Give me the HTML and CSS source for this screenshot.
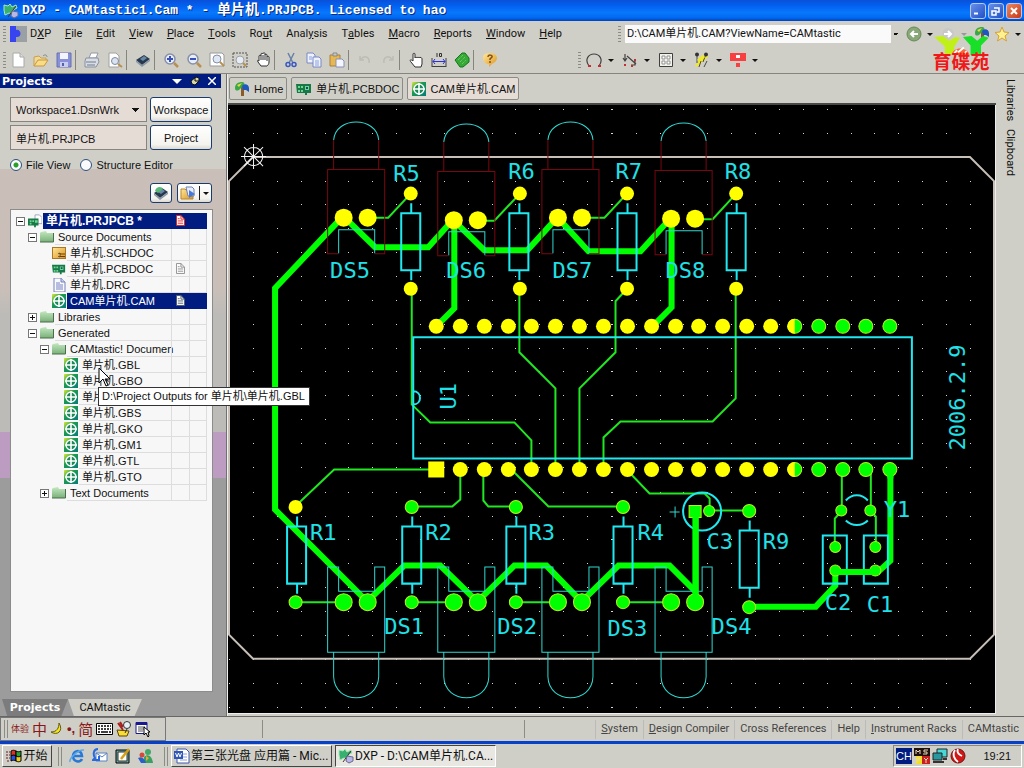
FILE: index.html
```html
<!DOCTYPE html>
<html lang="zh-CN">
<head>
<meta charset="utf-8">
<title>DXP - CAMtastic1.Cam</title>
<link rel="stylesheet" href="styles.css">
</head>
<body>
<svg class="defs" aria-hidden="true">
  <defs>
    <linearGradient id="g-cam" x1="0" y1="0" x2="1" y2="1"><stop offset="0" stop-color="#d8e83c"/><stop offset=".4" stop-color="#1c9a50"/><stop offset="1" stop-color="#087c78"/></linearGradient>
    <linearGradient id="g-folder" x1="0" y1="0" x2="0" y2="1"><stop offset="0" stop-color="#c4e8c0"/><stop offset="1" stop-color="#78b078"/></linearGradient>
    <linearGradient id="g-gold" x1="0" y1="0" x2="1" y2="1"><stop offset="0" stop-color="#ffe89a"/><stop offset="1" stop-color="#dd9420"/></linearGradient>
    <symbol id="i-cam" viewBox="0 0 14 14"><rect width="14" height="14" fill="url(#g-cam)"/><circle cx="7" cy="7" r="5" fill="#188c58" stroke="#fff" stroke-width="1.4"/><path d="M7 1v12M1 7h12" stroke="#fff" stroke-width="1.6"/></symbol>
    <symbol id="i-folder" viewBox="0 0 14 14"><path d="M1 2l5-1 1 2h6v9H0V3z" fill="url(#g-folder)"/><path d="M0 12h13.500V3" fill="none" stroke="#4c6c4c"/></symbol>
    <symbol id="i-pcb" viewBox="0 0 16 14"><path d="M0 2h15v9h-4v2H9v-2H1z" fill="#187848"/><path d="M2 4h2v2H2zM5 4h2v2H5zM2 8h2v2H2zM5 8h2v2H5zM9 4h4v4H9z" fill="#70d890"/><path d="M10 5h2v2h-2z" fill="#184878"/></symbol>
    <symbol id="i-prj" viewBox="0 0 16 14"><path d="M8 0h5l3 3v7H8z" fill="#fff" stroke="#98a0b8"/><path d="M0 4h12v8H9v2H7v-2H0z" fill="#187848"/><path d="M2 6h2v2H2zM5 6h2v2H5zM2 9h2v2H2zM8 6h3v3H8z" fill="#70d890"/></symbol>
    <symbol id="i-page" viewBox="0 0 14 14"><path d="M2 0h7l4 4v10H2z" fill="#f8faff" stroke="#7880b8"/><path d="M9 0v4h4" fill="#c8d0f0" stroke="#7880b8"/><path d="M4 5h4M4 7h7M4 9h7M4 11h7" stroke="#7880c0"/></symbol>
    <symbol id="i-sch" viewBox="0 0 14 14"><rect x=".5" y="1.500" width="13" height="11" fill="url(#g-gold)" stroke="#a87828"/><path d="M8 8h5M8 10.500h5M6 8l2-1v4l-2-1" fill="#f8dc90" stroke="#684010"/></symbol>
    <symbol id="i-status" viewBox="0 0 10 12"><path d="M.5.5h5l4 4v7h-9z" fill="#fff" stroke="currentColor"/><path d="M5.500.5v4h4M2 4h2M2 6.500h6M2 9h6" fill="none" stroke="currentColor"/></symbol>
    <symbol id="i-dxp" viewBox="0 0 16 16"><path d="M1 2l4 1 2-2 2 3 4-2 1 3-4 2 1 4-5-1-4 2-1-5z" fill="#38b070" stroke="#a8e8b8"/><path d="M5 14l8-11" stroke="#503030"/><path d="M9 8l6 1v4l-4 2-3-2z" fill="#b8b8e8" stroke="#686890"/></symbol>
    <symbol id="i-home" viewBox="0 0 16 16"><path d="M7 5l3 1v9H7z" fill="#8a5a28"/><path d="M1 7c0-4 3-6 7-6 2 0 3 1 2 3L5 9C3 10 1 10 1 7z" fill="#38a848"/><path d="M8 5c2-3 7-2 7 2v4l-3-2H9z" fill="#1c58c0"/><path d="M3 4l5-2-3 4z" fill="#f0d840"/></symbol>
    <symbol id="i-chip" viewBox="0 0 16 16"><path d="M1 8l8-5 6 4-8 6z" fill="#28384c"/><path d="M1 8v2l6 5v-2zM7 15l8-6V7l-8 6z" fill="#8898a8"/><path d="M5 7l4-3 3 2-4 3z" fill="#6888a8"/></symbol>
    <symbol id="i-glass" viewBox="0 0 16 16"><circle cx="7" cy="7" r="5" fill="#e8eef8" stroke="#8890a8" stroke-width="1.500"/><path d="M11 11l4 4" stroke="#b89050" stroke-width="2.500"/></symbol>
  </defs>
</svg>

<header class="titlebar">
  <svg class="ic16"><use href="#i-dxp"/></svg>
  <h1 class="title">DXP - CAMtastic1.Cam * - <span class="cjk">单片机</span>.PRJPCB. Licensed to hao</h1>
  <button class="win" aria-label="Minimize"><svg viewBox="0 0 14 14"><path d="M3 9.500h4" stroke="#fff" stroke-width="2"/></svg></button>
  <button class="win" aria-label="Restore"><svg viewBox="0 0 14 14"><path d="M5 4h5v4H8M3 7h4v4H3z" fill="none" stroke="#fff" stroke-width="1.500"/></svg></button>
  <button class="win close" aria-label="Close"><svg viewBox="0 0 14 14"><path d="M4 4l6 6M10 4l-6 6" stroke="#fff" stroke-width="2"/></svg></button>
</header>

<nav class="menubar" aria-label="Main menu">
  <span class="grip"></span>
  <svg class="menu-logo" viewBox="0 0 17 16"><path d="M0 0h17v16H0z" fill="#9ba0a4"/><path d="M0 0h6v4c5-2 7 8 0 7v5H0z" fill="#3844f0"/></svg>
  <div class="menus">
    <button>D<u>X</u>P</button><button><u>F</u>ile</button><button><u>E</u>dit</button><button><u>V</u>iew</button><button><u>P</u>lace</button><button><u>T</u>ools</button><button>Ro<u>u</u>t</button><button>Anal<u>y</u>sis</button><button>T<u>a</u>bles</button><button><u>M</u>acro</button><button><u>R</u>eports</button><button><u>W</u>indow</button><button><u>H</u>elp</button>
  </div>
  <div class="address">
    <span class="grip"></span>
    <select aria-label="Address"><option>D:\CAM单片机.CAM?ViewName=CAMtastic</option></select>
    <button aria-label="Back"><svg class="ic16" viewBox="0 0 16 16"><circle cx="8" cy="8" r="7" fill="#88a878" stroke="#688858"/><path d="M12 8H5M8 5L5 8l3 3" fill="none" stroke="#fff" stroke-width="2"/></svg><i class="caret"></i></button>
    <button aria-label="Forward"><svg class="ic16" viewBox="0 0 16 16"><circle cx="8" cy="8" r="6" fill="#c8c8c8"/><path d="M4 8h7M8 5l3 3-3 3" fill="none" stroke="#fff" stroke-width="2"/></svg><i class="caret dim"></i></button>
    <button aria-label="Home page"><svg class="ic16"><use href="#i-home"/></svg></button>
    <button aria-label="Favorites"><svg class="ic16" viewBox="0 0 16 16"><path d="M8 1l2 5 5 .5-4 3.500 1.500 5L8 12l-4.500 3L5 10 1 6.500 6 6z" fill="#fff090" stroke="#d8a030"/></svg><i class="caret"></i></button>
  </div>
  <div class="watermark">
    <svg viewBox="0 0 60 22"><path d="M2 2l9-1 7 5 6-4 5 1-6 9v9H13v-9z" fill="#c0f018"/><path d="M32 2l9-1 6 5 6-5 6 2-8 8v10H40V11z" fill="#18e028"/><path d="M20 21c2-9 16-9 19 0z" fill="#f86838"/><path d="M27 18l6-5M23 19l3-3M34 19l2-2" stroke="#fff" stroke-width="2"/></svg>
    <strong>育碟苑</strong>
  </div>
</nav>

<div class="toolbar" role="toolbar" aria-label="Standard">
  <span class="grip"></span>
  <button aria-label="New"><svg viewBox="0 0 16 16"><path d="M3 1h7l4 4v10H3z" fill="#fff" stroke="#a8a8a8"/><path d="M10 1v4h4" fill="#ddd" stroke="#a8a8a8"/></svg></button>
  <button aria-label="Open"><svg viewBox="0 0 16 16"><path d="M1 14V5l5-1 2 2h5v3" fill="#f0d898" stroke="#c8a050"/><path d="M1 14l4-6h10l-4 6z" fill="#f8dc88" stroke="#c89838"/><path d="M10 4c2-2 4-1 4 1" fill="none" stroke="#788"/></svg></button>
  <button aria-label="Save"><svg viewBox="0 0 16 16"><path d="M1 1h14v14H1z" fill="#8890d8" stroke="#6870b0"/><path d="M4 1h8v6H4z" fill="#f4f4ff"/><path d="M4 10h8v5H4z" fill="#c8ccf0"/><path d="M6 11h2v3H6z" fill="#5860a8"/></svg></button>
  <i class="sep"></i>
  <button aria-label="Print"><svg viewBox="0 0 16 16"><path d="M5 6l2-5h7l-2 5z" fill="#fff" stroke="#9098a8"/><path d="M2 6h12l1 4-3 5H1V9z" fill="#d8dce4" stroke="#8890a0"/><path d="M2 10h10M3 13h8" stroke="#707c90"/></svg></button>
  <button aria-label="Print preview"><svg viewBox="0 0 16 16"><path d="M2 1h7l3 3v11H2z" fill="#fff" stroke="#a0a0a0"/><circle cx="8" cy="9" r="3.500" fill="#d8e4f0" stroke="#8088a0"/><path d="M11 12l4 3" stroke="#b89050" stroke-width="2"/></svg></button>
  <i class="sep"></i>
  <button aria-label="Devices"><svg><use href="#i-chip"/></svg></button>
  <i class="sep"></i>
  <button aria-label="Zoom in"><svg viewBox="0 0 16 16"><use href="#i-glass"/><path d="M4 7h6M7 4v6" stroke="#3850b8" stroke-width="2"/></svg></button>
  <button aria-label="Zoom out"><svg viewBox="0 0 16 16"><use href="#i-glass"/><path d="M4 7h6" stroke="#3850b8" stroke-width="2"/></svg></button>
  <button aria-label="Fit document"><svg viewBox="0 0 16 16"><path d="M1 1h12l2 2v11H1z" fill="#fff" stroke="#989898"/><circle cx="8" cy="7" r="4" fill="#dde8f4" stroke="#8890a8"/><path d="M11 10l4 4" stroke="#b89050" stroke-width="2"/></svg></button>
  <button aria-label="Zoom area"><svg viewBox="0 0 16 16"><path d="M1 1h14v14H1z" fill="none" stroke="#505050" stroke-dasharray="2 1"/><circle cx="8" cy="8" r="4" fill="#e4ecf4" stroke="#a0a0a8"/><path d="M11 11l3 3" stroke="#b89050" stroke-width="2"/></svg></button>
  <button aria-label="Pan"><svg viewBox="0 0 16 16"><path d="M4 9V4c0-1 2-1 2 0V2c0-1 2-1 2 0V1.500c0-1 2-1 2 0V3c0-1 2-1 2 0v2c0-1 2-1 2 0v5c0 2-1 3-2 4H6L3 10C2 8 3 8 4 9z" fill="#fff" stroke="#303030"/><path d="M6 4v4M8 3v5M10 3v5M12 5v4" stroke="#303030"/></svg></button>
  <i class="sep"></i>
  <button aria-label="Cut"><svg viewBox="0 0 16 16"><path d="M5 1l5 10M11 1L6 11" stroke="#6880a8" stroke-width="1.500"/><circle cx="5" cy="12.500" r="2" fill="none" stroke="#3858c0" stroke-width="1.500"/><circle cx="11" cy="12.500" r="2" fill="none" stroke="#3858c0" stroke-width="1.500"/></svg></button>
  <button aria-label="Copy"><svg viewBox="0 0 16 16"><path d="M1 1h6l2 2v8H1z" fill="#eef2ff" stroke="#7888c0"/><path d="M7 5h6l2 2v8H7z" fill="#eef2ff" stroke="#7888c0"/><path d="M3 5h3M3 7h3M9 9h4M9 11h4M9 13h4" stroke="#88a0e0"/></svg></button>
  <button aria-label="Paste"><svg viewBox="0 0 16 16"><path d="M1 3h10v11H1z" fill="#e8b850" stroke="#a88040"/><path d="M4 1h4v3H4z" fill="#c8c8c8" stroke="#888"/><path d="M7 7h6l2 2v6H7z" fill="#f4f6ff" stroke="#8890b8"/></svg></button>
  <i class="sep"></i>
  <button aria-label="Undo" disabled><svg viewBox="0 0 16 16"><path d="M4 7c4-4 9-2 8 4M3 4v4h4" fill="none" stroke="#bcbcb8" stroke-width="1.500"/></svg></button>
  <button aria-label="Redo" disabled><svg viewBox="0 0 16 16"><path d="M12 7c-4-4-9-2-8 4M13 4v4H9" fill="none" stroke="#bcbcb8" stroke-width="1.500"/></svg></button>
  <i class="sep"></i>
  <button aria-label="Select"><svg viewBox="0 0 16 16"><path d="M5 9V2c0-1 2-1 2 0v4c0-1 2-1 2 0 0-1 2-1 2 0 0-1 3-1 3 1v5l-1 3H7L3 10C1 8 3 7 5 9z" fill="#fff" stroke="#303030"/></svg></button>
  <button aria-label="Measure"><svg viewBox="0 0 16 16"><path d="M1 6v9M15 6v9M1 14.500h14" fill="none" stroke="#404040"/><path d="M2 9.500h12M4 7L2 9.500 4 12M12 7l2 2.500-2 2.500" fill="none" stroke="#2830e0"/><path d="M6 1v4M8.500 1.500h2v3h-2z" fill="none" stroke="#303030"/></svg></button>
  <button aria-label="Board"><svg viewBox="0 0 16 16"><path d="M1 8l7-7h3l4 5v4l-6 5H6z" fill="#38a838" stroke="#107818"/><path d="M4 8l5-5M6 10l5-5M8 12l4-4" stroke="#80dc70" stroke-dasharray="1 1"/></svg></button>
  <i class="sep"></i>
  <button aria-label="Help"><svg viewBox="0 0 16 16"><path d="M8 1c4 0 7 2 7 5s-3 5-5 6l-3 3v-3c-3 0-6-2-6-6s3-5 7-5z" fill="url(#g-gold)"/><path d="M6 5c0-3 5-2 4 0L8 7v1M8 9v2" fill="none" stroke="#805018" stroke-width="1.500"/></svg></button>
  <div class="tools-right">
    <span class="grip"></span>
    <button aria-label="Arc"><svg viewBox="0 0 16 16"><path d="M3 14C-2 7 3 2 8 2s10 5 5 12" fill="none" stroke="#404040" stroke-width="1.200"/><path d="M2 14h3M12 14h3" stroke="#c03030" stroke-width="2"/></svg><i class="caret"></i></button>
    <button aria-label="Line"><svg viewBox="0 0 16 16"><path d="M3 2v7M1 6l2 3 2-3M5 4l9 8M13 9v4H9" fill="none" stroke="#404040" stroke-width="1.200"/><path d="M2 13h2M9 14h2M12 8h2" stroke="#c03030" stroke-width="2"/></svg><i class="caret"></i></button>
    <button aria-label="Grid"><svg viewBox="0 0 16 16"><path d="M1.500 1.500h13v13h-13z" fill="#f2f2ec" stroke="#404040"/><path d="M4 4h3v3H4zM9 4h3v3H9zM4 9h3v3H4zM9 9h3v3H9z" fill="#fff" stroke="#909090"/></svg><i class="caret"></i></button>
    <button aria-label="Inspect"><svg viewBox="0 0 16 16"><path d="M13 3l1 2-9 8-3 2-1-2z" fill="#f0e828"/><path d="M3 2v9M12 2l-3 8M7 9l-2 6M13 9l-3 6" stroke="#484848"/><path d="M4 9l6-5" stroke="#f0e828" stroke-width="3"/><circle cx="3" cy="2.500" r="2" fill="#333"/><circle cx="12" cy="2.500" r="2" fill="#333"/></svg><i class="caret"></i></button>
    <button aria-label="Pads"><svg viewBox="0 0 16 16"><path d="M0 1h16v8H0z" fill="#f84040"/><path d="M6 3h4v3H6z" fill="#fff"/><path d="M6 11h4v4H6z" fill="#f84040"/></svg><i class="caret"></i></button>
  </div>
</div>

<main class="workspace">
  <aside class="panel">
    <div class="panel-head"><h2>Projects</h2><i class="caret white"></i><svg class="pin" viewBox="0 0 10 10"><path d="M1 5l5-4 3 1v3L5 9 2 8z" fill="#d8d8a8" stroke="#111"/><path d="M5 1v4h4" fill="none" stroke="#111"/></svg><button class="x" aria-label="Close panel"><svg viewBox="0 0 8 8"><path d="M0 0l8 8M8 0L0 8" stroke="#fff" stroke-width="1.500"/></svg></button></div>
    <div class="panel-body">
      <div class="form">
        <select class="field" aria-label="Workspace file"><option>Workspace1.DsnWrk</option></select><button class="btn">Workspace</button>
        <input class="field" aria-label="Project file" value="单片机.PRJPCB"><button class="btn">Project</button>
      </div>
      <div class="radios">
        <label><input type="radio" name="view" checked>File View</label>
        <label><input type="radio" name="view">Structure Editor</label>
      </div>
      <div class="icon-btns">
        <button class="btn sm" aria-label="Compile"><svg class="ic16" viewBox="0 0 16 16"><use href="#i-chip"/><path d="M2 6c1-5 7-5 8-2l-5 4z" fill="#58b878"/></svg></button>
        <button class="btn md" aria-label="Open documents"><svg class="ic16" viewBox="0 0 16 16"><path d="M1 14V4h4l2 2h6v8z" fill="url(#g-gold)" stroke="#b88830"/><path d="M6 2h6l2 2v7H8z" fill="#e8eeff" stroke="#7080b0"/><path d="M9 5l6 4-6 4z" fill="#4878d8"/></svg><i class="bar"></i><i class="caret"></i></button>
      </div>
      <div class="tree" role="tree">
        <div class="row l0 sel top"><i class="ex open"></i><svg class="ti"><use href="#i-prj"/></svg><span class="name"><b>单片机.PRJPCB *</b></span><span class="cell red"><svg><use href="#i-status"/></svg></span><span class="cell"></span></div>
        <div class="row l1"><i class="ex open"></i><svg class="ti"><use href="#i-folder"/></svg><span class="name">Source Documents</span><span class="cell"></span><span class="cell"></span></div>
        <div class="row l2"><svg class="ti"><use href="#i-sch"/></svg><span class="name">单片机.SCHDOC</span><span class="cell"></span><span class="cell"></span></div>
        <div class="row l2"><svg class="ti"><use href="#i-pcb"/></svg><span class="name">单片机.PCBDOC</span><span class="cell"><svg><use href="#i-status"/></svg></span><span class="cell"></span></div>
        <div class="row l2"><svg class="ti"><use href="#i-page"/></svg><span class="name">单片机.DRC</span><span class="cell"></span><span class="cell"></span></div>
        <div class="row l2 sel"><svg class="ti"><use href="#i-cam"/></svg><span class="name">CAM单片机.CAM</span><span class="cell"><svg><use href="#i-status"/></svg></span><span class="cell"></span></div>
        <div class="row l1"><i class="ex"></i><svg class="ti"><use href="#i-folder"/></svg><span class="name">Libraries</span><span class="cell"></span><span class="cell"></span></div>
        <div class="row l1"><i class="ex open"></i><svg class="ti"><use href="#i-folder"/></svg><span class="name">Generated</span><span class="cell"></span><span class="cell"></span></div>
        <div class="row l2x"><i class="ex open"></i><svg class="ti"><use href="#i-folder"/></svg><span class="name">CAMtastic! Documen</span><span class="cell"></span><span class="cell"></span></div>
        <div class="row l3"><svg class="ti"><use href="#i-cam"/></svg><span class="name">单片机.GBL</span><span class="cell"></span><span class="cell"></span>
          <svg class="cursor" viewBox="0 0 14 20"><path d="M1 1v15l4-4 3 7 2-1-3-6h5z" fill="#fff" stroke="#000"/></svg>
          <span class="tooltip" role="tooltip">D:\Project Outputs for 单片机\单片机.GBL</span></div>
        <div class="row l3"><svg class="ti"><use href="#i-cam"/></svg><span class="name">单片机.GBO</span><span class="cell"></span><span class="cell"></span></div>
        <div class="row l3"><svg class="ti"><use href="#i-cam"/></svg><span class="name">单片机.GBP</span><span class="cell"></span><span class="cell"></span></div>
        <div class="row l3"><svg class="ti"><use href="#i-cam"/></svg><span class="name">单片机.GBS</span><span class="cell"></span><span class="cell"></span></div>
        <div class="row l3"><svg class="ti"><use href="#i-cam"/></svg><span class="name">单片机.GKO</span><span class="cell"></span><span class="cell"></span></div>
        <div class="row l3"><svg class="ti"><use href="#i-cam"/></svg><span class="name">单片机.GM1</span><span class="cell"></span><span class="cell"></span></div>
        <div class="row l3"><svg class="ti"><use href="#i-cam"/></svg><span class="name">单片机.GTL</span><span class="cell"></span><span class="cell"></span></div>
        <div class="row l3"><svg class="ti"><use href="#i-cam"/></svg><span class="name">单片机.GTO</span><span class="cell"></span><span class="cell"></span></div>
        <div class="row l2x"><i class="ex"></i><svg class="ti"><use href="#i-folder"/></svg><span class="name">Text Documents</span><span class="cell"></span><span class="cell"></span></div>
      </div>
    </div>
    <div class="panel-tabs"><button class="on">Projects</button><button>CAMtastic</button></div>
  </aside>

  <section class="docs">
    <div class="doc-tabs">
      <button><svg class="ic16"><use href="#i-home"/></svg>Home</button>
      <button><svg class="ic16"><use href="#i-pcb"/></svg>单片机.PCBDOC</button>
      <button class="on"><svg class="ic14"><use href="#i-cam"/></svg>CAM单片机.CAM</button>
    </div>
    <div class="canvas">
    <svg class="pcb" viewBox="228 105 766 609" preserveAspectRatio="xMinYMin slice" role="img" aria-label="PCB layout">
      <path id="grid" class="grid"/>
      <path class="outline" d="M253 157H969L993 181V634L969 658H253L229 634V181z"/>
      <defs>
        <g id="led-t"><path class="red" d="M338.500 253.500h-11v-84h57v84h-10M333.500 169v-29M378.500 169v-29"/><path class="cy1" d="M333.500 140c2-24 43-24 45 0M338.500 253v-23.500h36V253"/></g>
        <path id="led-b" class="cy1" d="M327.500 651.500v-85h11v24h36v-24h10v85zM333.500 652v24c1 28 44 28 45 0v-24"/>
        <path id="res" class="cy2" d="M-9 20H10V77H-9zM1 10V20M1 77V87"/>
      </defs>
      <g class="thick">
        <path d="M454 218L428 247H375L343 216L275 288V509L367 601L404 565H440L477 601L514 565H546L581 601L618 565H669L695 591"/>
        <path d="M453 220L484 250H527L557 217L588 251H640L670 218"/>
        <path d="M454 220V308L436 326M671 218V307L652 326M695 510V601M889.500 469V560L877 571.500H834.500V585L815 606H748"/>
      </g>
      <path class="thin" d="M367 217.500H388L410 194M477 220.500H494L519 194M581 217.500H604L626 194M694 219H712L735 194M411.500 288V404L430 422H514L531 440V469M519 288V352L555 388V469M627 288L615 301V352L579 388V469M735 288V398L712 421H620L603 437V469M436 469H334L295 506M460 469V499L452 506H412M483 469V500L488 506H515M511 469L548 506H622M626 469L649 493H704L709 498V510H748M295 601.500H343M411 601.500H453M515 601.500H557M622 601.500H670M841 469V510L834 518V546M870 473V510L875 516V546"/>
      <use href="#led-t"/><use href="#led-t" x="110" y="2"/><use href="#led-t" x="214"/><use href="#led-t" x="327" y="1"/>
      <use href="#led-b"/><use href="#led-b" x="110"/><use href="#led-b" x="214"/><use href="#led-b" x="327"/>
      <use href="#res" x="410" y="193"/><use href="#res" x="518" y="193"/><use href="#res" x="626" y="193"/><use href="#res" x="735" y="193"/>
      <use href="#res" x="296" y="506"/><use href="#res" x="411" y="506"/><use href="#res" x="515" y="506"/><use href="#res" x="622" y="506"/><use href="#res" x="748" y="510"/>
      <path class="cy2" d="M413 337H911V458H413zM413 391c9 0 9 13 0 13M822 535h24v48h-24zM863 535h24v48h-24zM845 500c6-7 16-7 22 0M845 520c6 6 16 6 22 0"/>
      <circle class="cy2" cx="701.500" cy="511" r="19"/>
      <path class="cy1" d="M669 511.500h10M674.500 506v11"/>
      <g class="py">
        <circle cx="343.500" cy="217.500" r="9"/><circle cx="367.500" cy="217.500" r="9"/><circle cx="453.500" cy="220" r="9"/><circle cx="477.500" cy="220" r="9"/><circle cx="557.500" cy="217.500" r="9"/><circle cx="581.500" cy="217.500" r="9"/><circle cx="670.500" cy="218.500" r="9"/><circle cx="694.500" cy="218.500" r="9"/>
        <circle cx="410.500" cy="193.500" r="7"/><circle cx="519.500" cy="193.500" r="7"/><circle cx="626.500" cy="193.500" r="7"/><circle cx="735.500" cy="193.500" r="7"/>
        <circle cx="410.500" cy="288.500" r="7"/><circle cx="519.500" cy="288.500" r="7"/><circle cx="626.500" cy="288.500" r="7"/><circle cx="735.500" cy="288.500" r="7"/><circle cx="295.500" cy="506.500" r="7"/>
        <path d="M428 461h16v16h-16z"/>
      </g>
      <g id="pins"></g>
      <g class="pg">
        <circle cx="343.500" cy="601.500" r="8.500"/><circle cx="367.500" cy="601.500" r="8.500"/><circle cx="453.500" cy="601.500" r="8.500"/><circle cx="477.500" cy="601.500" r="8.500"/><circle cx="557.500" cy="601.500" r="8.500"/><circle cx="581.500" cy="601.500" r="8.500"/><circle cx="670.500" cy="601.500" r="8.500"/><circle cx="694.500" cy="601.500" r="8.500"/>
        <circle cx="295.500" cy="601.500" r="6.500"/><circle cx="411.500" cy="601.500" r="6.500"/><circle cx="515.500" cy="601.500" r="6.500"/><circle cx="622.500" cy="601.500" r="6.500"/>
        <circle cx="411.500" cy="506.500" r="6.500"/><circle cx="515.500" cy="506.500" r="6.500"/><circle cx="622.500" cy="506.500" r="6.500"/><circle cx="748.500" cy="510.500" r="6.500"/><circle cx="748.500" cy="606.500" r="6.500"/>
        <path d="M688.500 505h12v12h-12z"/><circle cx="708.500" cy="510.500" r="5.500"/><circle cx="840.500" cy="510" r="5.500"/><circle cx="869.500" cy="510" r="5.500"/><circle cx="834.500" cy="546.500" r="5.500"/><circle cx="834.500" cy="570" r="5.500"/><circle cx="874.500" cy="546.500" r="5.500"/><circle cx="874.500" cy="570" r="5.500"/>
      </g>
      <path class="thick" d="M695 514V596M889.500 469V478M878 571.500H834.500V574"/>
      <path class="origin" d="M253.500 144v25M241 156.500h25M244 147l19 19M263 147l-19 19M253.500 147.500a9 9 0 1 0 .1 0"/>
      <g class="silk">
        <text x="393" y="181">R5</text><text x="508" y="179">R6</text><text x="615" y="179">R7</text><text x="724" y="179">R8</text>
        <text x="330" y="278">DS5</text><text x="446" y="278">DS6</text><text x="552" y="278">DS7</text><text x="665" y="278">DS8</text>
        <text x="310" y="539">R1</text><text x="425" y="539">R2</text><text x="528" y="539">R3</text><text x="637" y="539">R4</text>
        <text x="384" y="633">DS1</text><text x="497" y="633">DS2</text><text x="607" y="635">DS3</text><text x="711" y="633">DS4</text>
        <text x="706" y="548">C3</text><text x="762" y="548">R9</text><text x="883" y="516">Y1</text><text x="824" y="609">C2</text><text x="866" y="611">C1</text>
        <text transform="translate(456 409) rotate(-90)">U1</text><text transform="translate(964 450) rotate(-90)">2006.2.9</text>
      </g>
    </svg>
    </div>
  </section>
  <aside class="side"><button>Libraries</button><button>Clipboard</button></aside>
</main>

<footer class="statusbar">
  <div class="ime"><i class="lines"></i><span class="seal">体验</span><span>中</span><svg class="ic14" viewBox="0 0 14 14"><path d="M9 1c5 8-2 13-8 9 6 0 8-4 8-9z" fill="#f8e818" stroke="#605810"/></svg><span class="punct">•,</span><span>简</span><svg class="kb" viewBox="0 0 17 12"><path d="M.5.5h16v11H.5z" fill="#fff" stroke="#000"/><path d="M2 3h13M2 6h13" stroke="#000" stroke-width="1.500" stroke-dasharray="2 1"/><path d="M2 9h2M5 9h7M13 9h2" stroke="#000" stroke-width="1.500"/></svg><svg class="ic16" viewBox="0 0 16 16"><path d="M1 9l12 1-2 5H3z" fill="#f8e030" stroke="#604010"/><path d="M2 2l5 7M4 1l3 5" stroke="#a82020" stroke-width="2"/><circle cx="11" cy="4" r="3.500" fill="#e8f0f8" stroke="#333"/><path d="M11 8l-2 4" stroke="#333"/></svg><svg class="ic16" viewBox="0 0 16 16"><path d="M1 1.500h11v11H1z" fill="#fff" stroke="#181890"/><path d="M1 2.500h11" stroke="#181890" stroke-width="3"/><path d="M3 6h7M3 8h7M3 10h5" stroke="#555"/><path d="M9 6v8l2-2 2 4 1-1-1-4h2z" fill="#fff" stroke="#000"/></svg></div>
  <span class="pane"></span>
  <span class="pane"></span>
  <div class="panels-btns"><button><u>S</u>ystem</button><button><u>D</u>esign Compiler</button><button>Cross References</button><button>Help</button><button><u>I</u>nstrument Racks</button><button>CAMtastic</button></div>
</footer>

<div class="taskbar">
  <button class="start"><svg class="ic16" viewBox="0 0 16 16"><path d="M5 3c2-1 3-1 5 0v5c-2-1-3-1-5 0z" fill="#e03020" stroke="#000"/><path d="M10 3c2 1 3 1 5 0v5c-2 1-3 1-5 0z" fill="#28a038" stroke="#000"/><path d="M5 8c2-1 3-1 5 0v5c-2-1-3-1-5 0z" fill="#2850d8" stroke="#000"/><path d="M10 8c2 1 3 1 5 0v5c-2 1-3 1-5 0z" fill="#f0d020" stroke="#000"/><path d="M0 4h4M0 7h4M0 10h4M1 13h3" stroke="#602020" stroke-dasharray="2 1"/></svg>开始</button>
  <i class="tgrip"></i>
  <div class="quick">
    <button aria-label="Internet Explorer"><svg class="ic16" viewBox="0 0 16 16"><path d="M13 11c-2 4-9 3-9-3s8-7 9 0H5" fill="none" stroke="#2878d8" stroke-width="2.500"/><path d="M1 14C0 10 10 1 15 2" fill="none" stroke="#58a8e8" stroke-width="1.500"/></svg></button>
    <button aria-label="Outlook Express"><svg class="ic16" viewBox="0 0 16 16"><path d="M4 5h11v8H4z" fill="#fff" stroke="#5880c0"/><path d="M4 5l6 4 5-4" fill="none" stroke="#5880c0"/><path d="M6 1C1 1 1 7 3 10L1 12h6V8" fill="none" stroke="#2868e0" stroke-width="2"/></svg></button>
    <button aria-label="Show desktop"><svg class="ic16" viewBox="0 0 16 16"><path d="M1 2h13v13H1z" fill="#68a8a0" stroke="#000"/><path d="M3 4h9v9H3z" fill="#fff" stroke="#333"/><path d="M6 11l8-10" stroke="#d8a010" stroke-width="2.500"/></svg></button>
    <button aria-label="Messenger"><svg class="ic16" viewBox="0 0 16 16"><circle cx="10" cy="4" r="3" fill="#40a868"/><path d="M6 9c4-4 8-1 9 6H6z" fill="#38a060"/><circle cx="4" cy="7" r="2.500" fill="#d84838"/><path d="M0 10c4-2 6 0 8 5H3z" fill="#2860c8"/><path d="M8 8l3 2-3 3z" fill="#e8a838"/></svg></button>
  </div>
  <i class="tgrip"></i>
  <button class="task"><svg class="ic16" viewBox="0 0 16 16"><path d="M3 1h9l3 3v11H3z" fill="#fff" stroke="#4058a8"/><path d="M6 6h7M6 9h7M6 12h7" stroke="#88a0d8"/><path d="M0 3h9v8H0z" fill="#3058b8"/><path d="M1.500 5l1.500 4 1.500-4L6 9l1.500-4" fill="none" stroke="#fff"/></svg>第三张光盘 应用篇 - Mic...</button>
  <button class="task active"><svg class="ic16"><use href="#i-dxp"/></svg>DXP - D:\CAM单片机.CA...</button>
  <div class="tray"><span class="lang">CH</span><svg class="ic16" viewBox="0 0 16 16"><path d="M0 0h16v8H0z" fill="#201010"/><path d="M2 8h6v8H2z" fill="#f0e020"/><path d="M8 8h8v8H8z" fill="#c82020"/><path d="M2 6V2l2 2 2-2v4M14 2h-4v2h3v2h-4M3 15v-5h3v2H4M10 10l2 2 2-2M12 12v3" fill="none" stroke="#e8d8b0"/></svg><svg class="ic16" viewBox="0 0 16 16"><path d="M5 1h10v8H5z" fill="#48d8d8" stroke="#222"/><path d="M1 5h9v7H1z" fill="#2898a0" stroke="#222"/><path d="M1 14h11M11 11h4" stroke="#333" stroke-width="2"/></svg><svg class="ic16" viewBox="0 0 16 16"><circle cx="8" cy="8" r="7" fill="#d01818" stroke="#701010"/><path d="M5 2c-3 4-1 9 3 12M8 1c-2 4 2 6 4 7" fill="none" stroke="#fff" stroke-width="1.800"/></svg><time>19:21</time></div>
</div>
<script src="board.js"></script>
</body>
</html>
```

FILE: styles.css
```css
* { box-sizing: border-box; }
html, body { height: 100%; }
body {
  margin: 0;
  display: flex;
  flex-direction: column;
  background: #d0cfc7;
  color: #111;
  font: 11px/14px "Liberation Sans", "Noto Sans CJK SC", sans-serif;
  overflow: hidden;
}
button, input, select { font: inherit; color: inherit; margin: 0; border-radius: 0; }
button { padding: 0; border: 0; background: none; white-space: nowrap; display: flex; align-items: center; justify-content: center; }
svg { display: block; flex: none; }
.defs { position: absolute; width: 0; height: 0; }
.ic16 { width: 16px; height: 16px; }
.ic14 { width: 14px; height: 14px; }
.grip { width: 3px; height: 17px; flex: none; background: repeating-linear-gradient(#8c8c86 0 1px, transparent 1px 3px); }
.caret { width: 0; height: 0; flex: none; border: 3px solid transparent; border-top-color: #111; border-bottom: 0; }
.caret.dim { border-top-color: #999; }
.caret.white { border-width: 5px 5px 0; border-top-color: #fff; }

.titlebar { flex: none; height: 21px; display: flex; align-items: center; gap: 2px; padding: 0 2px 0 3px; background: linear-gradient(#0a50d8, #0262f2 30%, #0878fc 60%, #0068f0 85%, #0040b8); }
.title { flex: 1; margin: 0 0 0 1px; color: #fff; font: bold 13px/18px "Liberation Mono", "Noto Sans CJK SC", monospace; white-space: nowrap; text-shadow: 1px 1px #082880; overflow: hidden; }
.title .cjk { font-size: 14px; }
.win { width: 16px; height: 16px; border: 1px solid #b8c8f0; border-radius: 3px; background: linear-gradient(135deg, #6890e8, #2050c8); }
.win svg { width: 14px; height: 14px; }
.win.close { background: linear-gradient(135deg, #e88860, #c83818); }

.menubar { position: relative; flex: none; height: 26px; display: flex; align-items: center; padding-left: 3px; }
.menu-logo { width: 17px; height: 16px; margin-left: 4px; }
.menus { display: flex; flex: 1; padding-left: 3px; font-family: Roboto, sans-serif; gap: 14px; }
.address { display: flex; align-items: center; width: 406px; gap: 4px; }
.address select { flex: 1; min-width: 0; height: 18px; border: 0; padding: 0 2px; appearance: none; font-family: Roboto, "Noto Sans CJK SC", sans-serif; background: linear-gradient(45deg, transparent 50%, #111 50%) right 6px center / 3px 3px no-repeat, linear-gradient(-45deg, transparent 50%, #111 50%) right 3px center / 3px 3px no-repeat, linear-gradient(#d0cfc7, #d0cfc7) right / 11px 100% no-repeat, #fafafa; }
.address button { gap: 5px; }
.address .caret { margin-right: 3px; }
.watermark { position: absolute; right: 31px; top: 14px; width: 64px; z-index: 3; }
.watermark svg { width: 58px; height: 21px; margin: 0 auto; }
.watermark strong { display: block; margin-top: -4px; text-align: center; color: #f01818; font: bold 19px/18px "Noto Sans CJK SC", sans-serif; }

.toolbar { flex: none; height: 27px; display: flex; align-items: center; padding-left: 3px; border-bottom: 1px solid #85857e; }
.toolbar button { width: 23px; height: 22px; }
.toolbar svg { width: 16px; height: 16px; }
.sep { width: 5px; height: 20px; flex: none; border-left: 1px solid #85857e; }
.tools-right { display: flex; align-items: center; margin-left: auto; width: 446px; }
.toolbar .tools-right button { width: 36px; gap: 6px; padding-left: 2px; }

.workspace { flex: 1; min-height: 0; display: flex; }
.panel { width: 227px; flex: none; display: flex; flex-direction: column; border-right: 1px solid #70706c; background: linear-gradient(#d0cfc7 0 95px, #c9bfb8 95px 215px, #bdbbb8 240px 358px, #bc9cc0 358px 404px, #9c9c9c 404px); }
.panel-head { height: 14px; margin: 0 5px 0 0; padding: 0 5px 0 2px; display: flex; align-items: center; gap: 8px; background: #001c80; color: #fff; }
.panel-head h2 { flex: 1; margin: 0; font: bold 11px/13px "DejaVu Sans", sans-serif; }
.pin { width: 10px; height: 10px; }
.x svg { width: 8px; height: 8px; }
.panel-body { flex: 1; min-height: 0; display: flex; flex-direction: column; padding: 9px 14px 7px 10px; }
.form { display: grid; grid-template-columns: 1fr 62px; gap: 3px 3px; }
.field { min-width: 0; height: 25px; padding: 0 5px; border: 1px solid #87837f; background: #e6dcd6; }
select.field { appearance: none; background: linear-gradient(45deg, transparent 50%, #111 50%) right 10px center / 4px 4px no-repeat, linear-gradient(-45deg, transparent 50%, #111 50%) right 6px center / 4px 4px no-repeat, #e6dcd6; }
.btn { height: 25px; border: 1px solid #183c70; border-radius: 3px; background: linear-gradient(#fff, #f4f3ee 80%, #dcd9d0); }
.radios { display: flex; gap: 10px; padding-top: 7px; line-height: 16px; }
.radios label { display: flex; align-items: center; gap: 4px; }
.radios input { appearance: none; width: 12px; height: 12px; border: 1px solid #28507c; border-radius: 50%; background: #fafafa; }
.radios input:checked { background: radial-gradient(#28a028 0 2px, #fafafa 3px); }
.icon-btns { display: flex; justify-content: flex-end; gap: 5px; padding: 10px 0 6px; }
.btn.sm { width: 22px; height: 20px; }
.btn.md { width: 35px; height: 20px; gap: 3px; }
.bar { width: 1px; height: 14px; background: #222; }

.tree { flex: 1; width: 203px; padding: 3px 5px 0 5px; border: 1px solid #8c8c8c; background: #f7f7f7; }
.row { position: relative; display: flex; align-items: center; height: 16px; }
.l1 { padding-left: 12px; }
.l2 { padding-left: 36px; }
.l2x { padding-left: 24px; }
.l3 { padding-left: 48px; }
.ex { position: relative; width: 9px; height: 9px; flex: none; margin-right: 3px; border: 1px solid #777; background: linear-gradient(#111, #111) center / 5px 1px no-repeat, linear-gradient(#111, #111) center / 1px 5px no-repeat, #fff; }
.ex.open { background: linear-gradient(#111, #111) center / 5px 1px no-repeat, #fff; }
.ti { width: 14px; height: 14px; }
.name { flex: 1; min-width: 0; height: 16px; margin-left: 1px; padding-left: 3px; line-height: 16px; white-space: nowrap; border-bottom: 1px solid #ddd; }
.cell { width: 18px; height: 16px; flex: none; display: grid; place-items: center; border: solid #ddd; border-width: 0 0 1px 1px; color: #888; }
.cell svg { width: 9px; height: 11px; }
.cell + .cell { border-right: 1px solid #ddd; }
.sel .name, .sel .cell { background: #001c80; color: #fff; border-color: #001c80; }
.sel .cell svg { color: #456; }
.sel .red svg { color: #e01818; }
.top .name b { font-size: 12px; }
.cursor { position: absolute; left: 82px; top: 10px; width: 14px; height: 20px; z-index: 3; }
.tooltip { position: absolute; left: 82px; top: 30px; z-index: 4; padding: 1px 4px 1px 3px; border: 1px solid #333; background: #fff; line-height: 15px; white-space: nowrap; }

.panel-tabs { display: flex; height: 17px; flex: none; padding-left: 2px; }
.panel-tabs button { width: 74px; height: 17px; background: #d0cfc7; clip-path: polygon(0 0, 100% 0, 90% 100%, 8% 100%); font-family: Roboto, sans-serif; }
.panel-tabs .on { width: 66px; background: #7c7c7c; color: #fff; font: bold 11px/14px "DejaVu Sans", sans-serif; }

.docs { flex: 1; min-width: 0; display: flex; flex-direction: column; border-left: 1px solid #eee; }
.doc-tabs { flex: none; height: 31px; display: flex; align-items: center; gap: 4px; padding: 0 1px; border-bottom: 2px solid #484848; }
.doc-tabs button { height: 23px; gap: 4px; padding: 0 3px 0 4px; border: 1px solid #8c8c86; border-radius: 2px; }
.doc-tabs .on { background: #e6dcd6; }
.canvas { flex: 1; min-height: 0; background: #000; border-right: 1px solid #eee; border-bottom: 1px solid #eee; margin-bottom: 2px; }
.pcb { width: 100%; height: 100%; }
.grid { stroke: #d8d8d8; stroke-width: 1; fill: none; shape-rendering: crispEdges; }
.outline { fill: none; stroke: #c8c0b8; stroke-width: 2; }
.thick { fill: none; stroke: #00ff00; stroke-width: 6; }
.thin { fill: none; stroke: #20e820; stroke-width: 2; }
.red { fill: none; stroke: #780810; }
.cy1 { fill: none; stroke: #30d8d0; }
.cy2 { fill: none; stroke: #20e8f0; stroke-width: 2; }
.py { fill: #ffff00; }
.pg { fill: #00ff00; stroke: #b8f020; stroke-width: 1; }
.origin { fill: none; stroke: #f4f4f4; }
.silk { fill: #20e0e8; font: 22px "DejaVu Sans Mono", monospace; }

.side { width: 28px; flex: none; display: flex; flex-direction: column; align-items: center; gap: 8px; padding-top: 5px; }
.side button { writing-mode: vertical-rl; font-family: Roboto, sans-serif; }

.statusbar { flex: none; height: 25px; display: flex; align-items: center; border-top: 1px solid #666; }
.ime { display: flex; align-items: center; gap: 3px; width: 166px; height: 24px; padding: 0 3px; border: 1px solid #777; color: #881818; font: 15px/20px "Noto Sans CJK SC", sans-serif; white-space: nowrap; }
.ime span { flex: none; }
.ime .seal { font-size: 9px; }
.ime .punct { font: bold 13px/20px "Liberation Sans", sans-serif; }
.lines { width: 4px; height: 18px; border: solid #8c8c86; border-width: 0 1px; }
.kb { width: 17px; height: 12px; }
.pane { width: 97px; height: 18px; border-right: 1px solid #8c8c86; }
.pane + .pane { width: 262px; }
.panels-btns { display: flex; margin-left: auto; color: #444; }
.panels-btns button { height: 19px; padding: 0 5px; border-left: 1px solid #bbb; font-family: Roboto, sans-serif; }

.taskbar { flex: none; height: 27px; display: flex; align-items: center; padding: 0 2px; gap: 3px; border-top: 3px solid #0840c8; font-size: 12px; }
.start { width: 50px; height: 22px; gap: 1px; border: 1px solid #444; border-color: #fff #444 #444 #fff; }
.tgrip { width: 4px; height: 19px; margin-left: 3px; flex: none; border: solid #8c8c86; border-width: 0 1px; }
.quick { display: flex; gap: 7px; padding: 0 4px; }
.task { width: 161px; height: 22px; justify-content: flex-start; gap: 1px; padding-left: 2px; border: 1px solid #444; border-color: #fff #444 #444 #fff; font-family: Roboto, "Noto Sans CJK SC", sans-serif; }
.task.active { background: #e8e7e2; border-color: #444 #fff #fff #444; }
.tray { display: flex; align-items: center; gap: 2px; width: 129px; height: 22px; margin-left: auto; padding: 0 10px 0 2px; border: 1px solid #999; border-color: #888 #fff #fff #888; }
.lang { width: 16px; background: #001c80; color: #fff; text-align: center; line-height: 16px; font-size: 11px; }
.tray time { margin-left: auto; font-size: 11px; }
```

FILE: board.js
```js
const NS = "http://www.w3.org/2000/svg";

// background snap grid
const step = 23.86;
let dots = "";
for (let r = 0; r < 26; r++) {
  for (let c = -1; c < 31; c++) {
    dots += `M${Math.round(253 + c * step)} ${Math.round(109 + r * step)}.5h1`;
  }
}
document.getElementById("grid").setAttribute("d", dots);

// two rows of DIP-40 pins
const pins = document.getElementById("pins");
function pad(x, y, r, cls) {
  const c = document.createElementNS(NS, "circle");
  c.setAttribute("cx", x);
  c.setAttribute("cy", y);
  c.setAttribute("r", r);
  c.setAttribute("class", cls);
  pins.appendChild(c);
}
for (const y of [326, 469]) {
  for (let i = 0; i < 20; i++) {
    const x = Math.round(436 + i * step);
    if (y === 469 && i === 0) continue;
    if (i < 15) {
      pad(x, y, 7.5, "py");
    } else if (i > 15) {
      pad(x, y, 7, "pg");
    } else {
      pad(x, y, 7, "pg");
      const half = document.createElementNS(NS, "path");
      half.setAttribute("d", `M${x} ${y - 7.5}a7.5 7.5 0 0 0 0 15z`);
      half.setAttribute("class", "py");
      pins.appendChild(half);
    }
  }
}
```
